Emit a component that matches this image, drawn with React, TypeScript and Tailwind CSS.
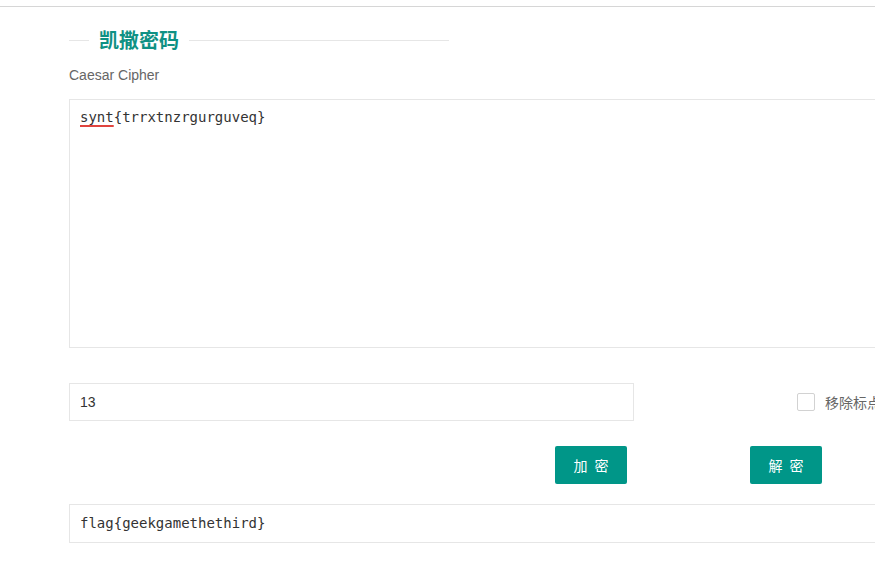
import React from "react";

export default function App() {
  return (
    <div className="w-[875px] h-[574px] overflow-hidden bg-white" style={{ fontFamily: '"Liberation Sans", "Noto Sans CJK SC", sans-serif' }}>
      <div className="h-[6px]" />
      <div className="border-t border-[#d6d6d6] w-full" />
      <div className="pl-[69px] w-[1100px]">
        <div className="flex items-center w-[380px] mt-[23px] h-[20px]">
          <div className="w-[20px] border-t border-[#e6e6e6]" />
          <div className="px-[10px] text-[20px] leading-[20px] font-bold text-[#0f9184]" style={{ fontFamily: '"Noto Sans CJK SC", sans-serif' }}>凯撒密码</div>
          <div className="flex-1 border-t border-[#e6e6e6]" />
        </div>
        <div className="mt-[17px] text-[14px] leading-[16px] text-[#666]">Caesar Cipher</div>
        <div className="mt-[16px] h-[249px] w-[1000px] border border-[#e6e6e6] px-[10px] pt-[6px]">
          <div className="text-[14px] leading-[22px] text-[#333]" style={{ fontFamily: '"DejaVu Sans Mono", monospace' }}>
            <span className="underline decoration-[#e0443e] decoration-[1.5px] underline-offset-[3px]">synt</span>
            {"{trrxtnzrgurguveq}"}
          </div>
        </div>
        <div className="mt-[35px] flex items-center h-[38px]">
          <div className="w-[565px] h-[38px] border border-[#e6e6e6] flex items-center px-[10px] text-[14px] text-[#333]">13</div>
          <div className="ml-[163px] w-[18px] h-[18px] border border-[#d2d2d2] rounded-[2px] bg-white" />
          <div className="ml-[10px] text-[14px] text-[#666] whitespace-nowrap" style={{ fontFamily: '"Noto Sans CJK SC", sans-serif' }}>移除标点符号</div>
        </div>
        <div className="mt-[25px] flex h-[38px]">
          <div className="ml-[486px] w-[72px] h-[38px] bg-[#009688] rounded-[2px] text-white text-[14px] flex items-center justify-center tracking-[7px] pl-[7px]" style={{ fontFamily: '"Noto Sans CJK SC", sans-serif' }}>加密</div>
          <div className="ml-[123px] w-[72px] h-[38px] bg-[#009688] rounded-[2px] text-white text-[14px] flex items-center justify-center tracking-[7px] pl-[7px]" style={{ fontFamily: '"Noto Sans CJK SC", sans-serif' }}>解密</div>
        </div>
        <div className="mt-[20px] h-[39px] w-[1000px] border border-[#e6e6e6] flex items-center px-[10px]">
          <div className="text-[14px] text-[#333]" style={{ fontFamily: '"DejaVu Sans Mono", monospace' }}>flag{"{geekgamethethird}"}</div>
        </div>
      </div>
    </div>
  );
}
